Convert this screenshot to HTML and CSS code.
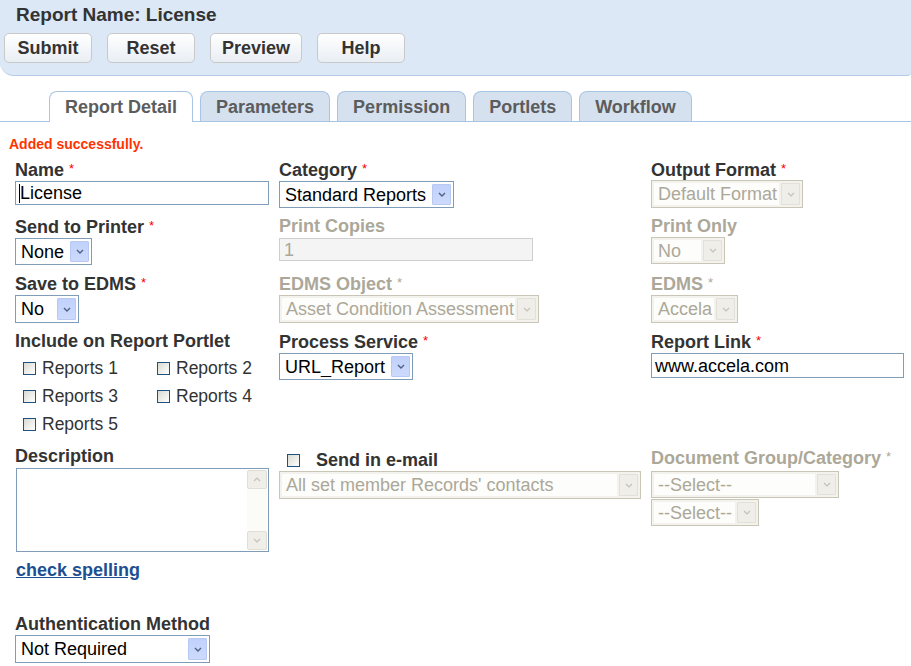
FILE: index.html
```html
<!DOCTYPE html>
<html>
<head>
<meta charset="utf-8">
<title>Report Detail</title>
<link rel="stylesheet" href="styles.css">
</head>
<body>
<div class="header">
  <div class="title">Report Name: License</div>
  <div class="buttons">
    <button class="btn">Submit</button>
    <button class="btn">Reset</button>
    <button class="btn">Preview</button>
    <button class="btn">Help</button>
  </div>
</div>

<div class="tabs">
  <div class="tab active">Report Detail</div>
  <div class="tab">Parameters</div>
  <div class="tab">Permission</div>
  <div class="tab">Portlets</div>
  <div class="tab">Workflow</div>
</div>

<div class="msg">Added successfully.</div>

<div class="form">
  <!-- row 1 -->
  <div class="cell">
    <div class="lbl">Name <span class="req">*</span></div>
    <div class="inp w-name"><span class="caret"></span>License</div>
  </div>
  <div class="cell">
    <div class="lbl">Category <span class="req">*</span></div>
    <div class="sel w-cat"><span class="sel-txt">Standard Reports</span><span class="sel-btn"><svg width="8" height="5" viewBox="0 0 8 5"><path d="M1 1L4 4L7 1" fill="none" stroke="#4d6185" stroke-width="1.4"/></svg></span></div>
  </div>
  <div class="cell">
    <div class="lbl">Output Format <span class="req">*</span></div>
    <div class="sel dis w-out"><span class="sel-txt">Default Format</span><span class="sel-btn"><svg width="8" height="5" viewBox="0 0 8 5"><path d="M1 1L4 4L7 1" fill="none" stroke="#c4c2b6" stroke-width="1.2"/></svg></span></div>
  </div>

  <!-- row 2 -->
  <div class="cell">
    <div class="lbl">Send to Printer <span class="req">*</span></div>
    <div class="sel w-printer"><span class="sel-txt">None</span><span class="sel-btn"><svg width="8" height="5" viewBox="0 0 8 5"><path d="M1 1L4 4L7 1" fill="none" stroke="#4d6185" stroke-width="1.4"/></svg></span></div>
  </div>
  <div class="cell">
    <div class="lbl dlbl">Print Copies</div>
    <div class="inp dinp w-copies">1</div>
  </div>
  <div class="cell">
    <div class="lbl dlbl">Print Only</div>
    <div class="sel dis w-only"><span class="sel-txt">No</span><span class="sel-btn"><svg width="8" height="5" viewBox="0 0 8 5"><path d="M1 1L4 4L7 1" fill="none" stroke="#c4c2b6" stroke-width="1.2"/></svg></span></div>
  </div>

  <!-- row 3 -->
  <div class="cell">
    <div class="lbl">Save to EDMS <span class="req">*</span></div>
    <div class="sel w-save"><span class="sel-txt">No</span><span class="sel-btn"><svg width="8" height="5" viewBox="0 0 8 5"><path d="M1 1L4 4L7 1" fill="none" stroke="#4d6185" stroke-width="1.4"/></svg></span></div>
  </div>
  <div class="cell">
    <div class="lbl dlbl">EDMS Object <span class="req dreq">*</span></div>
    <div class="sel dis w-obj"><span class="sel-txt">Asset Condition Assessment</span><span class="sel-btn"><svg width="8" height="5" viewBox="0 0 8 5"><path d="M1 1L4 4L7 1" fill="none" stroke="#c4c2b6" stroke-width="1.2"/></svg></span></div>
  </div>
  <div class="cell">
    <div class="lbl dlbl">EDMS <span class="req dreq">*</span></div>
    <div class="sel dis w-edms"><span class="sel-txt">Accela</span><span class="sel-btn"><svg width="8" height="5" viewBox="0 0 8 5"><path d="M1 1L4 4L7 1" fill="none" stroke="#c4c2b6" stroke-width="1.2"/></svg></span></div>
  </div>

  <!-- row 4 -->
  <div class="cell">
    <div class="lbl">Include on Report Portlet</div>
    <div class="checks">
      <label class="chk"><span class="box"></span>Reports 1</label>
      <label class="chk"><span class="box"></span>Reports 2</label>
      <label class="chk"><span class="box"></span>Reports 3</label>
      <label class="chk"><span class="box"></span>Reports 4</label>
      <label class="chk"><span class="box"></span>Reports 5</label>
    </div>
  </div>
  <div class="cell">
    <div class="lbl">Process Service <span class="req">*</span></div>
    <div class="sel w-proc"><span class="sel-txt">URL_Report</span><span class="sel-btn"><svg width="8" height="5" viewBox="0 0 8 5"><path d="M1 1L4 4L7 1" fill="none" stroke="#4d6185" stroke-width="1.4"/></svg></span></div>
  </div>
  <div class="cell">
    <div class="lbl">Report Link <span class="req">*</span></div>
    <div class="inp w-link">www.accela.com</div>
  </div>

  <!-- row 5 -->
  <div class="cell">
    <div class="lbl">Description</div>
    <div class="textarea">
      <div class="scroll">
        <span class="sbtn"><svg width="8" height="5" viewBox="0 0 8 5"><path d="M1 4L4 1L7 4" fill="none" stroke="#c4c2b6" stroke-width="1.2"/></svg></span>
        <span class="sbtn"><svg width="8" height="5" viewBox="0 0 8 5"><path d="M1 1L4 4L7 1" fill="none" stroke="#c4c2b6" stroke-width="1.2"/></svg></span>
      </div>
    </div>
    <a class="link" href="#">check spelling</a>
    <div class="lbl auth">Authentication Method</div>
    <div class="sel w-auth"><span class="sel-txt">Not Required</span><span class="sel-btn"><svg width="8" height="5" viewBox="0 0 8 5"><path d="M1 1L4 4L7 1" fill="none" stroke="#4d6185" stroke-width="1.4"/></svg></span></div>
  </div>
  <div class="cell email">
    <label class="lbl chk-lbl"><span class="box"></span>Send in e-mail</label>
    <div class="sel dis w-mail"><span class="sel-txt">All set member Records' contacts</span><span class="sel-btn"><svg width="8" height="5" viewBox="0 0 8 5"><path d="M1 1L4 4L7 1" fill="none" stroke="#c4c2b6" stroke-width="1.2"/></svg></span></div>
  </div>
  <div class="cell docgrp">
    <div class="lbl dlbl">Document Group/Category <span class="req dreq">*</span></div>
    <div class="sel dis w-grp"><span class="sel-txt">--Select--</span><span class="sel-btn"><svg width="8" height="5" viewBox="0 0 8 5"><path d="M1 1L4 4L7 1" fill="none" stroke="#c4c2b6" stroke-width="1.2"/></svg></span></div>
    <div class="sel dis w-grp2"><span class="sel-txt">--Select--</span><span class="sel-btn"><svg width="8" height="5" viewBox="0 0 8 5"><path d="M1 1L4 4L7 1" fill="none" stroke="#c4c2b6" stroke-width="1.2"/></svg></span></div>
  </div>
</div>
</body>
</html>
```
FILE: styles.css
```css
* { box-sizing: border-box; }
body {
  margin: 0;
  font-family: "Liberation Sans", Arial, sans-serif;
  color: #333;
  background: #fff;
}
.header {
  height: 76px;
  background: #dce8f6;
  border-bottom: 1px solid #b3cbe8;
  border-bottom-left-radius: 14px;
  border-bottom-right-radius: 4px;
  padding-top: 4px;
}
.title {
  font-size: 19px;
  font-weight: bold;
  line-height: 22px;
  margin-left: 16px;
  color: #333;
}
.buttons {
  display: flex;
  gap: 15px;
  margin: 7px 0 0 4px;
}
.btn {
  height: 30px;
  min-width: 88px;
  padding: 0 11px;
  font-family: "Liberation Sans", Arial, sans-serif;
  font-size: 18px;
  font-weight: bold;
  color: #333;
  border: 1px solid #c9c9c9;
  border-radius: 5px;
  background: linear-gradient(#ffffff, #e9eef4);
}
.tabs {
  display: flex;
  align-items: flex-end;
  gap: 7px;
  margin-top: 15px;
  padding-left: 49px;
  border-bottom: 1px solid #a9c5e6;
  height: 31px;
}
.tab {
  height: 30px;
  padding: 0 15px;
  font-size: 18px;
  font-weight: bold;
  line-height: 30px;
  color: #5c5c5c;
  background: #d5e1ee;
  border: 1px solid #a9c5e6;
  border-bottom: none;
  border-radius: 8px 8px 0 0;
}
.tab.active {
  background: #fff;
  height: 31px;
  margin-bottom: -1px;
}
.msg {
  margin-top: 14px;
  padding-left: 9px;
  font-size: 14px;
  line-height: 16px;
  font-weight: bold;
  color: #ff3300;
}
.form {
  display: grid;
  grid-template-columns: 264px 372px 1fr;
  row-gap: 8px;
  padding-left: 15px;
  margin-top: 7px;
}
.cell {
  display: flex;
  flex-direction: column;
  align-items: flex-start;
}
.lbl {
  font-size: 18px;
  font-weight: bold;
  line-height: 20px;
  color: #333;
  white-space: nowrap;
}
.dlbl { color: #aca899; }
.req {
  color: #f00;
  font-size: 13px;
  font-weight: normal;
  vertical-align: 3px;
}
.dreq { color: #aca899; }

.inp {
  margin-top: 1px;
  height: 24px;
  border: 1px solid #7f9db9;
  background: #fff;
  font-size: 18px;
  line-height: 22px;
  padding-left: 3px;
  color: #000;
  white-space: nowrap;
  display: flex;
  align-items: center;
}
.caret {
  display: inline-block;
  width: 1px;
  height: 19px;
  background: #000;
}
.dinp {
  margin-top: 2px;
  height: 23px;
  border-color: #cfcfcf;
  background: #f4f4f4;
  color: #aca899;
  padding-left: 4px;
}
.w-name { width: 254px; }
.w-copies { width: 254px; }
.w-link { width: 253px; height: 25px; }

.sel {
  margin-top: 1px;
  height: 27px;
  display: flex;
  align-items: stretch;
  border: 1px solid #7f9db9;
  background: #fff;
  padding: 2px 2px 2px 0;
}
.sel-txt {
  flex: 1;
  font-size: 18px;
  line-height: 22px;
  padding-left: 5px;
  color: #000;
  white-space: nowrap;
  overflow: hidden;
}
.sel-btn {
  width: 19px;
  display: flex;
  align-items: center;
  justify-content: center;
  background: linear-gradient(#c0d1fb, #cddafc);
  border: 1px solid #b7c9f3;
  border-radius: 1px;
}
.sel.dis {
  border-color: #c9c6b8;
  background: #f3f2ec;
  padding: 2px;
}
.sel.dis .sel-txt {
  background: #fdfdfb;
  color: #aca899;
  padding-left: 4px;
  margin-right: 2px;
}
.sel.dis .sel-btn {
  background: #efeee9;
  border-color: #e2e0d8;
}
.w-cat { width: 175px; }
.w-out { width: 152px; margin-top: 0; height: 28px; }
.w-printer { width: 77px; }
.w-only { width: 74px; }
.w-save { width: 64px; height: 28px; }
.w-obj { width: 260px; height: 28px; }
.w-edms { width: 87px; height: 28px; }
.w-proc { width: 134px; }
.w-auth { width: 195px; height: 28px; }
.w-mail { width: 362px; height: 28px; }
.w-grp { width: 188px; margin-top: 3px; }
.w-grp2 { width: 108px; margin-top: 1px; }

.checks {
  margin-top: 3px;
  padding-left: 8px;
  display: grid;
  grid-template-columns: 134px 120px;
  grid-auto-rows: 28px;
}
.chk {
  display: flex;
  align-items: center;
  gap: 6px;
  font-size: 17.5px;
  color: #333;
  white-space: nowrap;
}
.box {
  width: 13px;
  height: 13px;
  border: 1px solid #1c5180;
  background: linear-gradient(135deg, #d9d9d2, #ffffff);
  flex: none;
}

.textarea {
  margin: 2px 0 0 1px;
  width: 253px;
  height: 84px;
  border: 1px solid #7f9db9;
  background: #fff;
  display: flex;
  justify-content: flex-end;
  padding: 1px;
}
.scroll {
  width: 20px;
  background: #fbfbf7;
  display: flex;
  flex-direction: column;
  justify-content: space-between;
}
.sbtn {
  height: 19px;
  display: flex;
  align-items: center;
  justify-content: center;
  background: #efeee9;
  border: 1px solid #e0ded5;
  border-radius: 2px;
}
.link {
  margin: 8px 0 0 1px;
  font-size: 18px;
  line-height: 20px;
  font-weight: bold;
  color: #1d4f91;
  text-decoration: underline;
}
.auth { margin-top: 34px; }

.email { padding-top: 4px; }
.chk-lbl {
  display: flex;
  align-items: center;
  gap: 16px;
  padding-left: 8px;
}
.docgrp { padding-top: 1px; }
```
